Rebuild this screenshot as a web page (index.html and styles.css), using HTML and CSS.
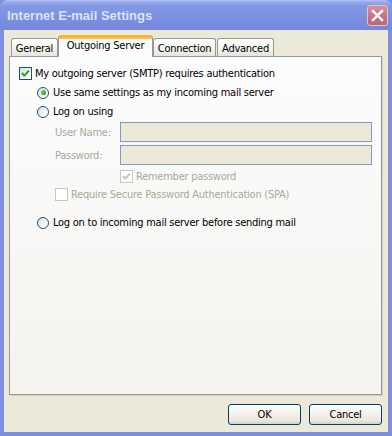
FILE: index.html
```html
<!DOCTYPE html>
<html lang="en">
<head>
  <meta charset="UTF-8">
  <title>Internet E-mail Settings</title>
  <link rel="stylesheet" href="styles.css">
</head>
<body>
  <div class="window">
    <div class="titlebar">
      <span class="title">Internet E-mail Settings</span>
      <button class="close-btn" aria-label="Close">
        <svg width="13" height="13" viewBox="0 0 13 13">
          <path d="M2 2 L11 11 M11 2 L2 11" stroke="#fff" stroke-width="2.4" stroke-linecap="square"/>
        </svg>
      </button>
    </div>

    <div class="frame">
      <div class="tabs">
        <div class="tab tab-general">General</div>
        <div class="tab tab-active">Outgoing Server</div>
        <div class="tab tab-connection">Connection</div>
        <div class="tab tab-advanced">Advanced</div>
      </div>

      <div class="panel">
        <label class="row row-auth">
          <span class="check">
            <svg width="11" height="11" viewBox="0 0 11 11"><path d="M2 5 L4.3 7.6 L9 2.6" fill="none" stroke="#21a121" stroke-width="2"/></svg>
          </span>
          My outgoing server (SMTP) requires authentication
        </label>

        <label class="row row-radio row-same">
          <span class="radio radio-on"></span>
          Use same settings as my incoming mail server
        </label>

        <label class="row row-radio row-logon">
          <span class="radio"></span>
          Log on using
        </label>

        <div class="field field-user">
          <span class="field-label">User Name:</span>
          <span class="input"></span>
        </div>
        <div class="field field-pass">
          <span class="field-label">Password:</span>
          <span class="input"></span>
        </div>

        <label class="row row-remember disabled">
          <span class="check check-off">
            <svg width="11" height="11" viewBox="0 0 11 11"><path d="M2 5 L4.3 7.6 L9 2.6" fill="none" stroke="#c9c7ba" stroke-width="2"/></svg>
          </span>
          Remember password
        </label>

        <label class="row row-spa disabled">
          <span class="check check-off"></span>
          Require Secure Password Authentication (SPA)
        </label>

        <label class="row row-radio row-before">
          <span class="radio"></span>
          Log on to incoming mail server before sending mail
        </label>
      </div>

      <div class="buttons">
        <button class="btn">OK</button>
        <button class="btn">Cancel</button>
      </div>
    </div>
  </div>
</body>
</html>
```

FILE: styles.css
```css
body {
  margin: 0;
  padding: 0;
  font-family: "DejaVu Sans Condensed", "DejaVu Sans", sans-serif;
  font-size: 11px;
  letter-spacing: -0.25px;
  color: #000;
}

.window {
  width: 392px;
  height: 436px;
  display: flex;
  flex-direction: column;
  background-color: #7b8ee0;
}

.titlebar {
  height: 30px;
  flex: none;
  display: flex;
  align-items: center;
  justify-content: space-between;
  padding: 0 4px 0 7px;
  box-sizing: border-box;
  border-radius: 7px 7px 0 0;
  background: linear-gradient(to bottom, #b4c3f3 0, #96aaed 2px, #8398e4 6px, #7c90e0 18px, #7488dc 30px);
}

.title {
  font-family: "Liberation Sans", Arial, sans-serif;
  font-weight: bold;
  font-size: 13px;
  letter-spacing: 0;
  color: #d8e2f8;
  margin-top: 1px;
}

.close-btn {
  width: 21px;
  height: 21px;
  padding: 0;
  margin-top: 1px;
  border: 1px solid #e6c3cb;
  border-radius: 3px;
  background: linear-gradient(to bottom, #d8919f, #c27284 60%, #b86a7c);
  display: flex;
  align-items: center;
  justify-content: center;
}

.frame {
  flex: 1;
  display: flex;
  flex-direction: column;
  margin: 0 4px 4px;
  padding: 5px 6px 7px 5px;
  background-color: #ece9d8;
}

/* tabs */
.tabs {
  height: 21px;
  display: flex;
  align-items: flex-end;
  padding-left: 2px;
  position: relative;
  z-index: 1;
}

.tab {
  height: 18px;
  box-sizing: border-box;
  border: 1px solid #919b9c;
  border-bottom: none;
  border-radius: 3px 3px 0 0;
  background: linear-gradient(to bottom, #ffffff, #f3f2ee 60%, #e6e4dc);
  display: flex;
  justify-content: center;
  align-items: center;
  padding-top: 1px;
}

.tab-general { width: 47px; }
.tab-connection { width: 63px; }
.tab-advanced { width: 57px; margin-left: 1px; }

.tab-active {
  width: 95px;
  height: 22px;
  margin-bottom: -1px;
  border-top: 3px solid #f6b340;
  box-shadow: inset 0 1px 0 #ffc73c;
  border-radius: 3px 3px 0 0;
  background: #fcfcfe;
  padding-top: 0;
  padding-bottom: 4px;
}

/* panel */
.panel {
  flex: 1;
  display: flex;
  flex-direction: column;
  border: 1px solid #919b9c;
  box-shadow: 1px 1px 0 #d2d0c5;
  background: linear-gradient(to bottom, #fcfcfe, #f4f3ee);
  padding: 10px 0 0 9px;
}

.row {
  height: 13px;
  display: flex;
  align-items: center;
  gap: 3px;
  white-space: nowrap;
}

.row-radio { margin-left: 18px; gap: 4px; }
.row-same { margin-top: 6px; }
.row-logon { margin-top: 6px; }
.row-remember { margin-top: 5px; margin-left: 101px; }
.row-spa { margin-top: 5px; margin-left: 36px; }
.row-before { margin-top: 15px; }

.disabled { color: #aca899; }

.check {
  width: 13px;
  height: 13px;
  box-sizing: border-box;
  border: 1px solid #1c5180;
  background: linear-gradient(135deg, #dcdcd7, #ffffff 80%);
  display: flex;
  align-items: center;
  justify-content: center;
}

.check-off {
  border-color: #cac8bb;
  background: #ffffff;
}

.radio {
  width: 12px;
  height: 12px;
  box-sizing: border-box;
  border: 1px solid #1c5180;
  border-radius: 50%;
  background: linear-gradient(135deg, #dcdcd7, #ffffff 80%);
  display: flex;
  align-items: center;
  justify-content: center;
}

.radio-on::after {
  content: "";
  width: 5px;
  height: 5px;
  border-radius: 50%;
  background: radial-gradient(circle at 35% 35%, #5ce05a, #21a121 70%);
}

/* text fields */
.field {
  display: flex;
  align-items: center;
  margin-left: 36px;
  color: #aca899;
}

.field-user { margin-top: 4px; }
.field-pass { margin-top: 3px; }

.field-label {
  width: 65px;
}

.input {
  width: 252px;
  height: 20px;
  box-sizing: border-box;
  border: 1px solid #7f9db9;
  background-color: #ece9d8;
}

/* buttons */
.buttons {
  display: flex;
  justify-content: flex-end;
  gap: 8px;
  margin-top: 9px;
}

.btn {
  width: 73px;
  height: 21px;
  padding: 0;
  border: 1px solid #003c74;
  border-radius: 3px;
  background: linear-gradient(to bottom, #ffffff, #f3f2ec 40%, #ece9dc 80%, #d8d2c6);
  font-family: "DejaVu Sans Condensed", "DejaVu Sans", sans-serif;
  font-size: 11px;
  letter-spacing: -0.25px;
  color: #000;
}
```
